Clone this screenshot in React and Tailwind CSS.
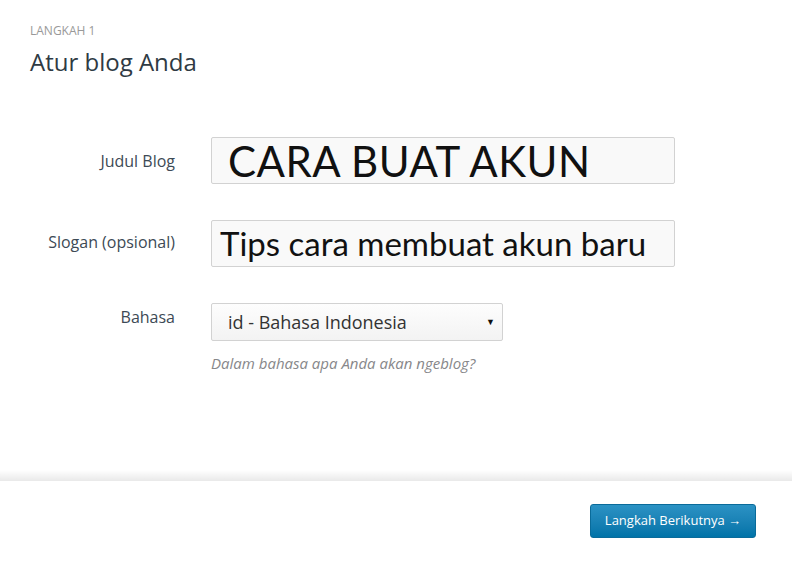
import React from 'react'

const rows = [
  { label: 'Judul Blog', value: 'CARA BUAT AKUN', big: true },
  { label: 'Slogan (opsional)', value: 'Tips cara membuat akun baru', big: false },
]

export default function App() {
  return (
    <div className="min-h-[561px] w-[792px] bg-white font-['Open_Sans',sans-serif] text-[#333]">
      {/* Header */}
      <div className="px-[30px] pt-[24px] h-[470px]">
        <p className="text-[12px] uppercase text-[#999] leading-[14px]">Langkah 1</p>
        <h1 className="mt-[8px] text-[24px] leading-[32px] text-[#2f3a43]">Atur blog Anda</h1>

        {/* Form */}
        <div className="mt-[59px] flex flex-col gap-[36px]">
          {rows.map((row) => (
            <div key={row.label} className="flex">
              <label className={`w-[145px] shrink-0 text-right text-[16px] text-[#3d4a55] whitespace-nowrap ${row.big ? 'pt-[12px]' : 'pt-[10px]'}`}>
                {row.label}
              </label>
              <div className="ml-[36px] w-[464px] h-[47px] border border-[#d2d2d2] bg-[#f9f9f9] rounded-[2px] flex items-center overflow-hidden">
                {row.big ? (
                  <span className="pl-[16px] font-['Lato',sans-serif] text-[42px] leading-none text-[#111] tracking-[0.5px] whitespace-nowrap">{row.value}</span>
                ) : (
                  <span className="pl-[8px] font-['Lato',sans-serif] text-[33px] leading-none text-[#111] whitespace-nowrap">{row.value}</span>
                )}
              </div>
            </div>
          ))}

          <div className="flex">
            <label className="w-[145px] shrink-0 text-right text-[16px] text-[#3d4a55] pt-[2px]">Bahasa</label>
            <div className="ml-[36px]">
              <div className="w-[292px] h-[38px] border border-[#d2d2d2] rounded-[2px] bg-gradient-to-b from-[#fdfdfd] to-[#f3f3f3] flex items-center justify-between pl-[16px] pr-[7px]">
                <span className="text-[18px] text-[#333] whitespace-nowrap">id - Bahasa Indonesia</span>
                <span className="text-[9px] text-[#111]">▼</span>
              </div>
              <p className="mt-[11px] text-[15px] italic text-[#87878a] whitespace-nowrap">Dalam bahasa apa Anda akan ngeblog?</p>
            </div>
          </div>
        </div>
      </div>

      {/* Footer */}
      <div className="h-[11px] bg-gradient-to-b from-white to-[#e9e9e9]" />
      <div className="flex justify-end pr-[36px] pt-[23px]">
        <button className="w-[166px] h-[34px] rounded-[3px] bg-gradient-to-b from-[#2b92c4] to-[#0073a8] border border-[#0a6b9a] text-white text-[13px]">
          Langkah Berikutnya →
        </button>
      </div>
    </div>
  )
}
